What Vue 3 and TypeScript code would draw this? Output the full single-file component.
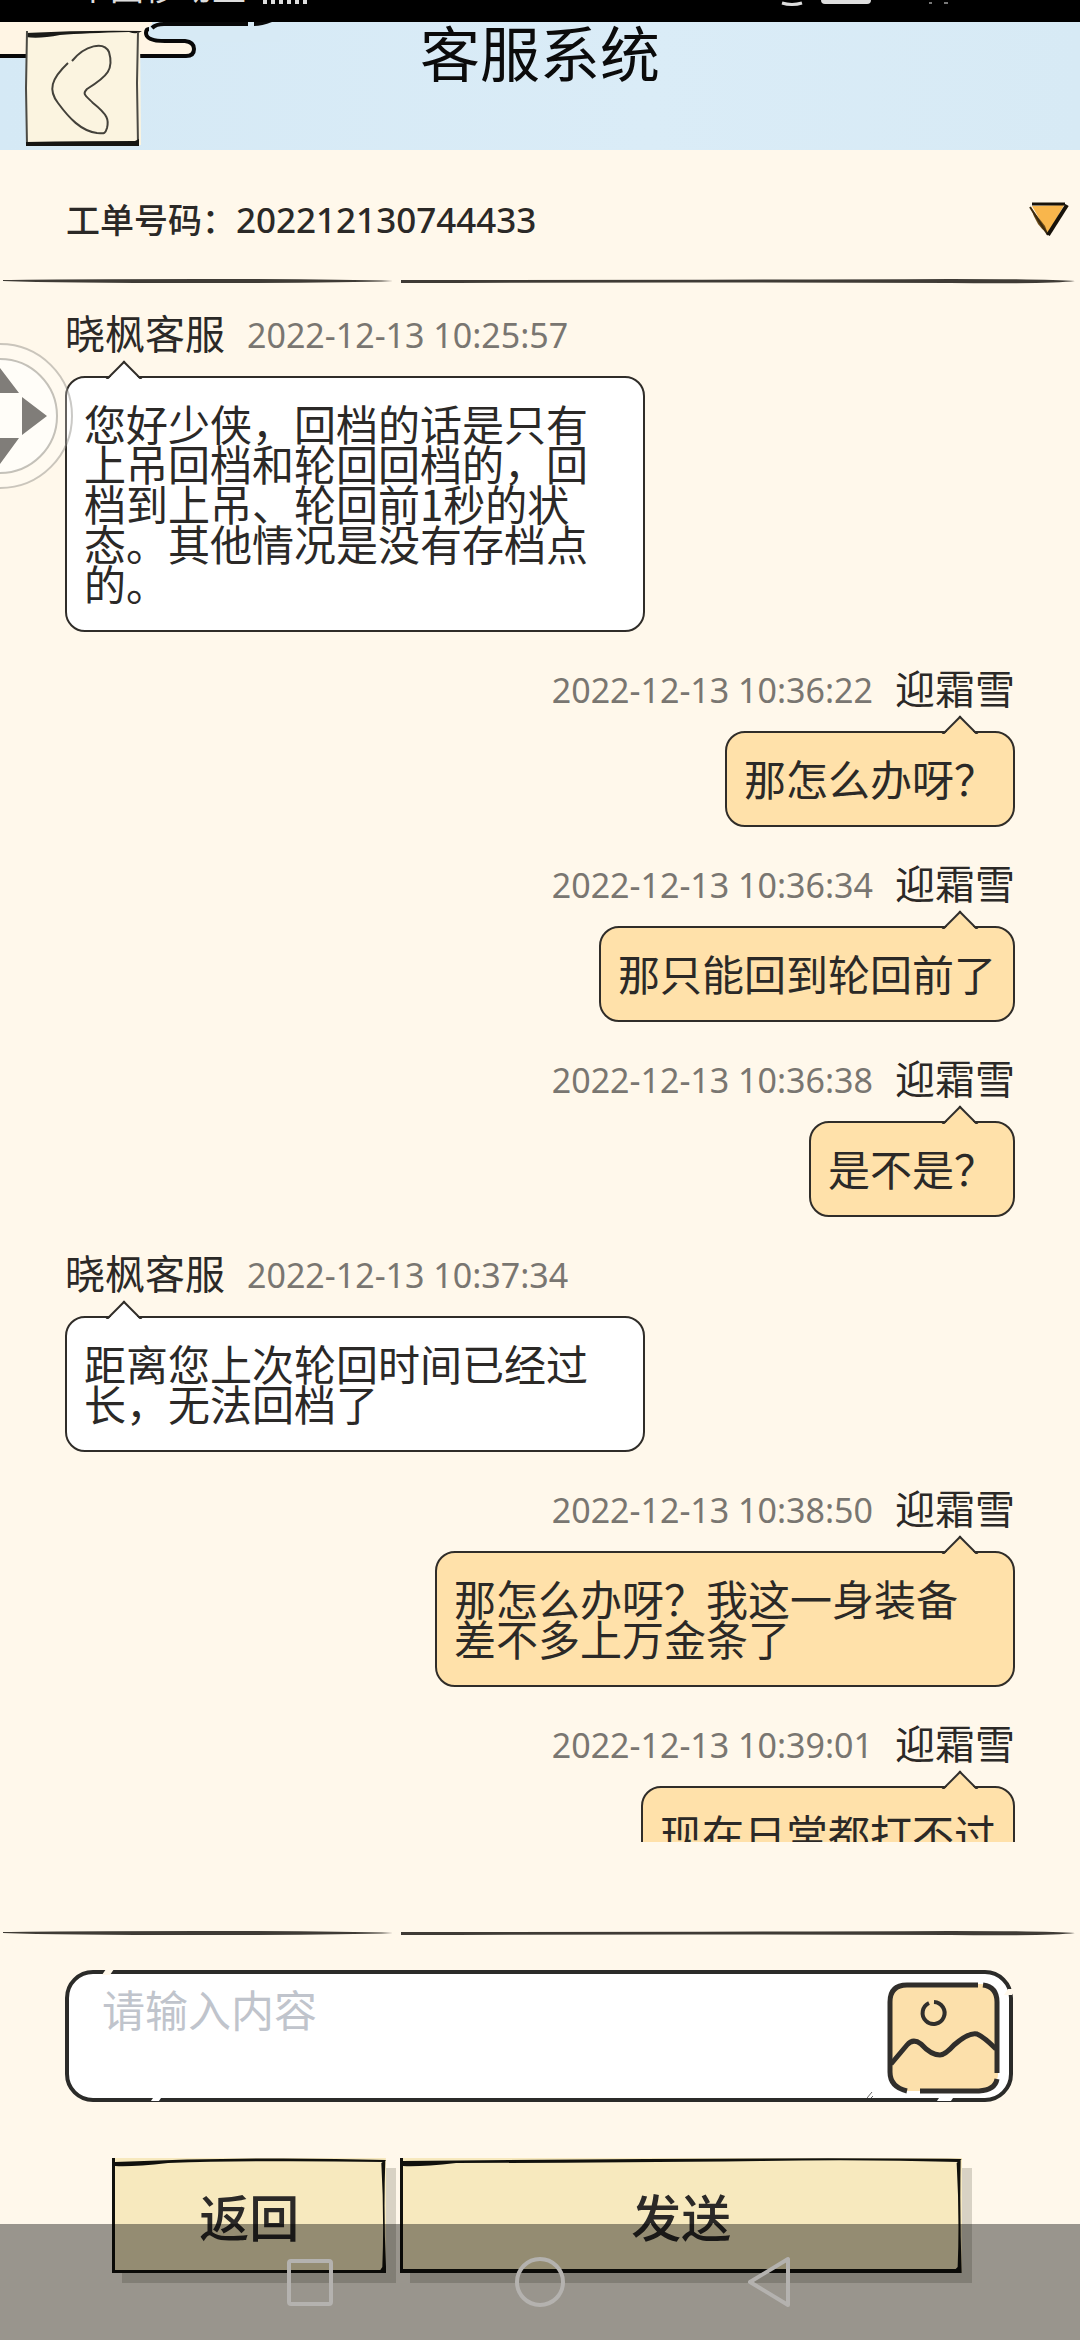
<script setup lang="ts">
import { ref } from 'vue'

interface Message {
  id: number
  from: 'staff' | 'player'
  name: string
  time: string
  text: string
}

const ticket = '202212130744433'
const draft = ref('')
const messages: Message[] = [
  { id: 1, from: 'staff', name: '晓枫客服', time: '2022-12-13 10:25:57', text: '您好少侠，回档的话是只有上吊回档和轮回回档的，回档到上吊、轮回前1秒的状态。其他情况是没有存档点的。' },
  { id: 2, from: 'player', name: '迎霜雪', time: '2022-12-13 10:36:22', text: '那怎么办呀？' },
  { id: 3, from: 'player', name: '迎霜雪', time: '2022-12-13 10:36:34', text: '那只能回到轮回前了' },
  { id: 4, from: 'player', name: '迎霜雪', time: '2022-12-13 10:36:38', text: '是不是？' },
  { id: 5, from: 'staff', name: '晓枫客服', time: '2022-12-13 10:37:34', text: '距离您上次轮回时间已经过长，无法回档了' },
  { id: 6, from: 'player', name: '迎霜雪', time: '2022-12-13 10:38:50', text: '那怎么办呀？我这一身装备差不多上万金条了' },
  { id: 7, from: 'player', name: '迎霜雪', time: '2022-12-13 10:39:01', text: '现在日常都打不过' },
]
</script>

<template>
  <div class="page">
    <div class="status">
      <span class="carrier">中国移动互</span>
      <svg class="signal" width="50" height="20" viewBox="0 0 50 20">
        <path d="M3 10V18M11 8V18M19 6V18M27 4V18M35 2V18M43 0V18" stroke="#ddd" stroke-width="4" />
      </svg>
      <svg class="battery" width="172" height="20" viewBox="0 0 172 20">
        <path d="M4 17Q14 20 24 17" fill="none" stroke="#ddd" stroke-width="3" />
        <rect x="43" y="0" width="50" height="18" rx="4" fill="#dedede" />
        <path d="M151 17h3M166 17h4" stroke="#777" stroke-width="2" />
      </svg>
    </div>

    <header class="header">
      <svg class="cloud" width="280" height="128" viewBox="0 0 280 128">
        <path d="M0 0H250L160 2Q147 4 147 12Q147 20 165 20H185Q194 21 194 28Q194 34 186 34H0Z" fill="#fff5e4" />
        <path d="M152 0H280V20H165Q147 20 147 12Q147 6 152 2Z" fill="#d7eaf5" />
        <path d="M0 34H186Q194 34 194 27Q194 20 185 19H165Q146 19 146 11Q146 7 149 7" fill="none" stroke="#080808" stroke-width="4" />
        <path d="M152 6Q156 2 164 2H248" fill="none" stroke="#080808" stroke-width="4" />
        <path d="M254 0H272Q262 4 254 4Z" fill="#080808" />
      </svg>
      <button class="back" type="button" aria-label="返回上一页">
        <svg width="118" height="120" viewBox="0 0 118 120">
          <path d="M2 4L115 4L116 117L2 117Z" fill="#fbf4e0" />
          <path d="M1 5Q60 2 117 3Q112 7 104 4Q60 5 35 7Q14 11 1 9Z" fill="#1b1b18" />
          <path d="M2 3L1 60L2 117M113 4L112 55L113 116" fill="none" stroke="#4b4a44" stroke-width="2" />
          <path d="M1 114Q60 113 110 113L114 111V118H1Z" fill="#151512" />
          <path d="M47 33C60 17 79 13 84 24C89 41 83 48 62 61C57 66 60 67 68 75C83 87 84 92 82 100C80 107 78 105 72 105C56 103 44 90 33 75C23 62 26 51 43 35" fill="none" stroke="#43413a" stroke-width="2" stroke-linejoin="round" />
        </svg>
      </button>
      <h1 class="title">客服系统</h1>
    </header>

    <section class="ticket">
      <p class="ticket-text">工单号码：<span class="ticket-no">{{ ticket }}</span></p>
      <button class="expand" type="button" aria-label="展开工单">
        <svg width="42" height="38" viewBox="0 0 42 38">
          <path d="M4 5L36 4L20 33Z" fill="#f8b64c" />
          <path d="M3 7Q8 25 20 33L17 25Z" fill="#6b4a17" />
          <path d="M4 3L37 3" stroke="#17120a" stroke-width="3" />
          <path d="M2 6L20 34" fill="none" stroke="#3a2a10" stroke-width="2" />
          <path d="M20 34L39 4" fill="none" stroke="#17120a" stroke-width="4" />
        </svg>
      </button>
    </section>

    <svg class="rule" viewBox="0 0 1080 6" preserveAspectRatio="none">
      <path d="M3 2Q60 1 200 1Q340 1 393 3Q340 5 200 5Q60 5 3 3ZM401 2Q700 2 950 1Q1050 1 1075 3Q1050 6 950 5Q700 4 401 5Z" />
    </svg>

    <main class="chat">
      <article v-for="m in messages" :key="m.id" class="msg" :class="m.from">
        <div class="meta">
          <span class="name">{{ m.name }}</span>
          <time class="time">{{ m.time }}</time>
        </div>
        <p class="bubble">{{ m.text }}</p>
      </article>
    </main>

    <svg class="rule" viewBox="0 0 1080 6" preserveAspectRatio="none">
      <path d="M3 2Q60 1 200 1Q340 1 393 3Q340 5 200 5Q60 5 3 3ZM401 2Q700 2 950 1Q1050 1 1075 3Q1050 6 950 5Q700 4 401 5Z" />
    </svg>

    <form class="composer" @submit.prevent>
      <div class="box">
        <textarea v-model="draft" class="input" aria-label="消息内容" placeholder="请输入内容"></textarea>
        <svg class="grip" width="6" height="6" viewBox="0 0 6 6"><path d="M0 6L5 0M4 6L6 4" stroke="#666" /></svg>
        <button class="picture" type="button" aria-label="发送图片">
          <svg width="114" height="112" viewBox="0 0 114 112">
            <rect x="2" y="2" width="109" height="107" rx="17" fill="#fce0ab" />
            <path d="M91 3H20Q3 3 3 20V90Q3 105 20 109M33 109H92Q108 108 110 97M110 91V20Q110 5 96 3" fill="none" stroke="#302e2b" stroke-width="5" />
            <path d="M4 82L20 63Q26 56 34 62Q44 73 53 73Q58 73 67 63Q82 50 90 52Q97 55 109 67" fill="none" stroke="#302e2b" stroke-width="5" />
            <path d="M47 20A11 11 0 1 1 42 21" fill="none" stroke="#302e2b" stroke-width="4" />
          </svg>
        </button>
        <i class="chip chip-a"></i>
        <i class="chip chip-b"></i>
        <i class="chip chip-c"></i>
        <i class="chip chip-d"></i>
      </div>
      <div class="actions">
        <button class="action small" type="button">
          <svg class="frame" viewBox="0 0 274 116" preserveAspectRatio="none">
            <path d="M0 0H3V4Q150 -2 274 2L271 4Q150 2 56 5Q20 9 3 8V113H268L270 110Q272 60 269 5L273 2Q271 60 274 116H0Z" />
          </svg>返回</button>
        <button class="action large" type="submit">
          <svg class="frame" viewBox="0 0 561 116" preserveAspectRatio="none">
            <path d="M0 0H3V3Q400 -1 561 1L558 4Q460 1 360 3Q180 5 56 5Q20 9 3 8V112H555L557 110Q559 60 556 5L560 1Q559 60 561 116H0Z" />
          </svg>发送</button>
      </div>
    </form>

    <svg class="pad" width="76" height="152" viewBox="0 0 76 152">
      <circle cx="0" cy="76" r="72" fill="#fff" fill-opacity=".25" stroke="#8a8780" stroke-opacity=".45" stroke-width="2" />
      <circle cx="0" cy="76" r="57" fill="#fff" fill-opacity=".5" stroke="#8a8780" stroke-opacity=".5" stroke-width="2" />
      <path d="M22 57L47 76L22 95ZM0 28L19 53H0ZM0 124L19 98H0Z" fill="#807d79" />
    </svg>

    <nav class="sysnav">
      <button type="button" aria-label="最近任务"><svg width="52" height="52" viewBox="0 0 52 52"><rect x="5" y="5" width="42" height="43" rx="2" /></svg></button>
      <button type="button" aria-label="主屏幕"><svg width="52" height="52" viewBox="0 0 52 52"><circle cx="26" cy="26" r="23" /></svg></button>
      <button type="button" aria-label="系统返回"><svg width="52" height="52" viewBox="0 0 52 52"><path d="M6 26L44 3V49Z" /></svg></button>
    </nav>
  </div>
</template>

<style>
body {
  margin: 0;
  background: #fff8eb;
}
</style>

<style scoped>
* {
  box-sizing: border-box;
}
.page {
  position: relative;
  display: flex;
  flex-direction: column;
  height: 100vh;
  overflow: hidden;
  background: #fff8eb;
  color: #2b2927;
  font-family: "Noto Sans CJK SC", sans-serif;
}
button {
  margin: 0;
  padding: 0;
  border: 0;
  background: none;
  color: inherit;
  font: inherit;
}
svg {
  display: block;
}
h1,
p {
  margin: 0;
}
.status {
  flex: none;
  display: flex;
  align-items: flex-end;
  height: 22px;
  padding: 0 130px 16px 76px;
  overflow: hidden;
  background: #000;
  color: #ddd;
}
.carrier {
  font-size: 34px;
  line-height: 40px;
}
.signal {
  margin-left: 16px;
}
.battery {
  margin-left: auto;
}
.header {
  flex: none;
  position: relative;
  display: flex;
  justify-content: center;
  height: 128px;
  background: linear-gradient(90deg, #d5e9f5, #daecf7 60%, #d7eaf5);
}
.cloud {
  position: absolute;
  left: 0;
  top: 0;
}
.back {
  position: absolute;
  left: 25px;
  top: 6px;
}
.title {
  position: relative;
  color: #0b0b0b;
  font-size: 60px;
  font-weight: 400;
  line-height: 58px;
}
.ticket {
  flex: none;
  display: flex;
  align-items: center;
  justify-content: space-between;
  height: 128px;
  padding: 12px 10px 0 66px;
}
.ticket-text {
  padding-bottom: 2px;
  font-size: 34px;
  font-weight: 500;
  line-height: 44px;
}
.ticket-no {
  font-family: "Noto Sans", sans-serif;
  font-size: 35px;
}
.rule {
  flex: none;
  width: 100%;
  height: 6px;
  fill: #3f3b35;
}
.chat {
  flex: 1;
  min-height: 0;
  overflow: hidden;
  padding: 30px 65px 0;
}
.msg {
  display: flex;
  flex-direction: column;
  align-items: flex-start;
  margin-bottom: 37px;
}
.meta {
  display: flex;
  align-items: flex-start;
  gap: 22px;
  height: 40px;
  margin-bottom: 22px;
}
.name {
  font-size: 40px;
  line-height: 36px;
}
.time {
  color: #797671;
  font-family: "Noto Sans", sans-serif;
  font-size: 34px;
  line-height: 42px;
}
.bubble {
  position: relative;
  max-width: 580px;
  padding: 25px 17px 27px;
  border: 2px solid #302d29;
  border-radius: 20px;
  background: #fff;
  font-size: 42px;
  line-height: 40px;
}
.bubble::before {
  content: "";
  position: absolute;
  left: 44px;
  top: -12px;
  width: 22px;
  height: 22px;
  border: 2px solid #302d29;
  border-right-color: transparent;
  border-bottom-color: transparent;
  background: inherit;
  background-clip: padding-box;
  transform: rotate(45deg);
}
.player {
  align-items: flex-end;
}
.player .meta {
  flex-direction: row-reverse;
}
.player .bubble {
  background: #ffe1aa;
}
.player .bubble::before {
  left: auto;
  right: 40px;
}
.chat + .rule {
  margin-top: 88px;
}
.composer {
  flex: none;
  padding: 34px 67px 67px 65px;
}
.box {
  position: relative;
  display: flex;
  height: 132px;
  padding: 8px 8px 0 33px;
  border: 4px solid #2b2b29;
  border-radius: 28px;
  background: #fff;
}
.input {
  flex: 1;
  min-width: 0;
  padding: 0;
  border: 0;
  outline: 0;
  resize: none;
  background: none;
  color: inherit;
  font-family: "Noto Sans CJK SC", sans-serif;
  font-size: 43px;
  line-height: 52px;
}
.input::placeholder {
  color: #c0c4cc;
}
.grip {
  align-self: flex-end;
  margin-right: 14px;
}
.picture {
  align-self: flex-start;
}
.chip {
  position: absolute;
  width: 8px;
  height: 6px;
  background: #fff8eb;
  transform: skewX(-35deg);
}
.chip-a {
  left: 35px;
  top: -5px;
}
.chip-b {
  left: 84px;
  bottom: -3px;
  background: #fff;
}
.chip-c {
  right: 56px;
  bottom: -3px;
  width: 14px;
  background: #fff;
}
.chip-d {
  right: -5px;
  top: 15px;
}
.actions {
  display: flex;
  gap: 14px;
  margin-top: 56px;
  padding: 0 51px 0 47px;
}
.action {
  position: relative;
  height: 115px;
  background: #f7e9be;
  box-shadow: 10px 10px 0 rgba(60, 60, 40, 0.2);
  font-size: 50px;
  font-weight: 500;
  line-height: 115px;
}
.small {
  flex: 274;
}
.large {
  flex: 561;
}
.frame {
  position: absolute;
  inset: 0;
  width: 100%;
  height: 100%;
  fill: #11110d;
}
.pad {
  position: absolute;
  left: 0;
  top: 340px;
}
.sysnav {
  position: absolute;
  left: 0;
  right: 0;
  bottom: 0;
  display: flex;
  justify-content: center;
  gap: 178px;
  height: 116px;
  background: rgba(0, 0, 0, 0.4);
}
.sysnav svg {
  fill: none;
  stroke: #b4b2af;
  stroke-width: 4;
  stroke-linejoin: round;
}
</style>
